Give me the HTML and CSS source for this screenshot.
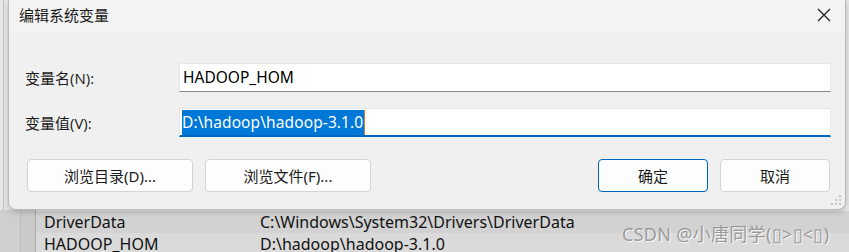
FILE: index.html
```html
<!DOCTYPE html>
<html lang="zh-CN">
<head>
    <meta charset="UTF-8">
    <meta name="viewport" content="width=device-width, initial-scale=1.0">
    <title>编辑系统变量</title>
    <link rel="stylesheet" href="styles.css">
</head>
<body>
    <div class="dialog">
        <div class="titlebar">
            <span class="title">编辑系统变量</span>
            <svg class="close" width="14" height="14" viewBox="0 0 14 14">
                <path d="M1 1 L13 13 M13 1 L1 13" stroke="#1a1a1a" stroke-width="1.2" fill="none"/>
            </svg>
        </div>
        <div class="body">
            <div class="form-row">
                <label class="label">变量名(N):</label>
                <div class="field">HADOOP_HOM</div>
            </div>
            <div class="form-row second">
                <label class="label">变量值(V):</label>
                <div class="field focused"><span class="selected">D:\hadoop\hadoop-3.1.0</span></div>
            </div>
            <div class="buttons">
                <div class="btn wide">浏览目录(D)...</div>
                <div class="btn wide">浏览文件(F)...</div>
                <div class="spacer"></div>
                <div class="btn primary">确定</div>
                <div class="btn">取消</div>
            </div>
        </div>
        <svg class="grip" width="12" height="12" viewBox="0 0 12 12">
            <rect x="9" y="1" width="2" height="2" fill="#c6c6c6"/>
            <rect x="5" y="5" width="2" height="2" fill="#c6c6c6"/>
            <rect x="9" y="5" width="2" height="2" fill="#c6c6c6"/>
            <rect x="1" y="9" width="2" height="2" fill="#c6c6c6"/>
            <rect x="5" y="9" width="2" height="2" fill="#c6c6c6"/>
            <rect x="9" y="9" width="2" height="2" fill="#c6c6c6"/>
        </svg>
    </div>
    <div class="list">
        <div class="list-row">
            <span class="name">DriverData</span>
            <span class="value">C:\Windows\System32\Drivers\DriverData</span>
        </div>
        <div class="list-row current">
            <span class="name">HADOOP_HOM</span>
            <span class="value">D:\hadoop\hadoop-3.1.0</span>
        </div>
    </div>
    <div class="watermark">CSDN @小唐同学(▯&gt;▯&lt;▯)</div>
</body>
</html>
```

FILE: styles.css
```css
body {
    margin: 0;
    width: 849px;
    height: 252px;
    overflow: hidden;
    position: relative;
    font-family: "Segoe UI", "Noto Sans", "Noto Sans CJK SC", sans-serif;
    color: #1a1a1a;
    background: linear-gradient(90deg, #e6e6e6 0, #e6e6e6 3px, #c4c4c4 3px, #c4c4c4 4px, #e6e6e6 4px);
}
.dialog {
    position: relative;
    z-index: 1;
    margin-left: 8px;
    width: 836px;
    height: 209px;
    background: #f0f0f0;
    border: 1px solid #b9b9b9;
    border-top: none;
    border-radius: 0 0 8px 8px;
    box-shadow: 0 2px 6px rgba(0, 0, 0, 0.18);
}
.titlebar {
    height: 33px;
    background: #f3f3f3;
    display: flex;
    align-items: center;
    justify-content: space-between;
    padding: 0 14px 4px 10px;
    box-sizing: border-box;
}
.title {
    font-size: 15px;
    font-family: "Noto Sans CJK SC", sans-serif;
}
.close {
    display: block;
}
.body {
    padding: 30px 14px 0 16px;
}
.form-row {
    display: flex;
    align-items: center;
    height: 29px;
    margin-bottom: 16px;
}
.form-row.second {
    margin-bottom: 22px;
}
.label {
    width: 154px;
    font-size: 15px;
    font-family: "Open Sans", "Noto Sans CJK SC", sans-serif;
}
.field {
    flex: 1;
    height: 29px;
    box-sizing: border-box;
    background: #ffffff;
    border: 1px solid #e6e6e6;
    border-bottom: 1px solid #878787;
    padding-left: 3px;
    font-size: 15.5px;
    line-height: 27px;
    font-family: "Noto Sans", sans-serif;
    color: #000;
}
.field.focused {
    border-bottom: 2px solid #0067c0;
    line-height: 26px;
    padding-left: 2px;
}
.selected {
    background: #0078d7;
    color: #ffffff;
    padding: 1px 1px 2px 0;
    letter-spacing: 0.1px;
    border-right: 1px solid #e07a2e;
}
.buttons {
    display: flex;
    gap: 12px;
    height: 33px;
    margin: 0 1px 0 2px;
}
.btn {
    width: 110px;
    box-sizing: border-box;
    border: 1px solid #d3d3d3;
    border-radius: 4px;
    background: #fdfdfd;
    display: flex;
    align-items: center;
    justify-content: center;
    font-size: 15px;
    font-family: "Noto Sans", "Noto Sans CJK SC", sans-serif;
}
.btn.wide {
    width: 166px;
}
.spacer {
    flex: 1;
}
.btn.primary {
    border-color: #0067c0;
}
.grip {
    position: absolute;
    right: 3px;
    bottom: 3px;
}
.list {
    height: 43px;
    background: linear-gradient(90deg, #cfcfcf 0, #cfcfcf 20px, #bdbdbd 20px, #bdbdbd 21px, #cacaca 21px, #cacaca 35px, #a9a9a9 35px, #a9a9a9 36px, transparent 36px);
    padding-top: 1px;
    box-sizing: border-box;
}
.list-row {
    display: flex;
    height: 22px;
    align-items: center;
    padding-left: 44px;
    font-size: 16px;
    font-family: "Noto Sans", sans-serif;
    color: #111;
    background: linear-gradient(90deg, transparent 36px, #d2d2d2 36px);
}
.list-row.current {
    background: linear-gradient(90deg, transparent 36px, #dadada 36px);
}
.name {
    width: 216px;
}
.watermark {
    position: absolute;
    left: 622px;
    top: 220px;
    z-index: 2;
    font-size: 18px;
    letter-spacing: 0.3px;
    font-family: "Noto Sans", "Noto Sans CJK SC", sans-serif;
    color: rgba(140, 140, 140, 0.85);
    text-shadow: 1px 1px 0 rgba(255, 255, 255, 0.8);
}
```
